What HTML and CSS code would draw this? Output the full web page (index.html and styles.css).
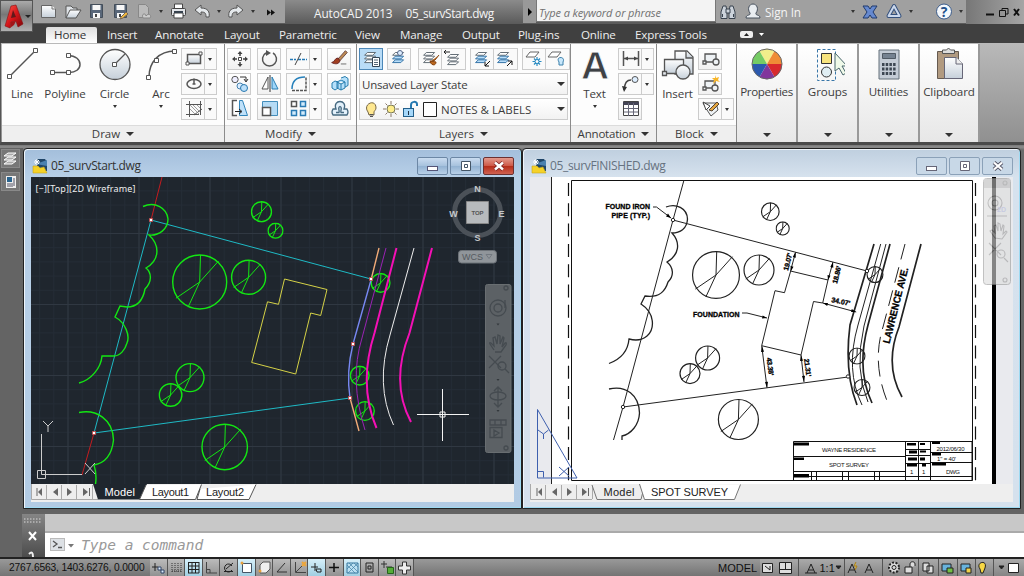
FILE: index.html
```html
<!DOCTYPE html>
<html lang="en">
<head>
<meta charset="utf-8">
<title>AutoCAD 2013 - 05_survStart.dwg</title>
<link rel="stylesheet" href="styles.css">
</head>
<body>
<svg class="defs" width="0" height="0" aria-hidden="true">
  <defs>
    <linearGradient id="steel" x1="0" y1="0" x2="0" y2="1"><stop offset="0" stop-color="#fff"/><stop offset="1" stop-color="#c6d0da"/></linearGradient>
    <linearGradient id="red" x1="0" y1="0" x2="1" y2="1"><stop offset="0" stop-color="#ff5a4c"/><stop offset=".5" stop-color="#d5161a"/><stop offset="1" stop-color="#7c0508"/></linearGradient>
    <pattern id="minor" x="67.5" y="233" width="14.2" height="14.2" patternUnits="userSpaceOnUse"><path d="M.5 0V14.2M0 .5H14.2" stroke="#242c36"/></pattern>
    <pattern id="major" x="67.5" y="233" width="71" height="71" patternUnits="userSpaceOnUse"><path d="M.5 0V71M0 .5H71" stroke="#303842"/></pattern>
    <symbol id="tree" viewBox="-1.1 -1.1 2.2 2.2"><g fill="none"><circle r="1" vector-effect="non-scaling-stroke"/><path d="M.03-1 0 0-.43.93M-.88.6 0 0 .7-.78" vector-effect="non-scaling-stroke" stroke-width="1"/></g></symbol>
    <symbol id="doc" viewBox="0 0 24 24"><path d="M5.500 5.500h11l3 3v9h-14z" fill="url(#steel)" stroke="#666"/><path d="M16 5v4h4" fill="#eee" stroke="#777"/></symbol>
    <symbol id="open" viewBox="0 0 24 24"><path d="M6 18V6h5l2 2h4v3" fill="#dfe3e7" stroke="#555"/><path d="M6 18l4-8h11l-5 8z" fill="url(#steel)" stroke="#555"/></symbol>
    <symbol id="save" viewBox="0 0 24 24"><path d="M6.500 4.500h12v13h-12z" fill="#596779" stroke="#444e5a"/><path d="M8.500 5h8v5h-8zM9 13h7v5H9z" fill="#f7f7f7"/><path d="M11 14h2v3h-2z" fill="#444"/></symbol>
    <symbol id="cloud" viewBox="0 0 24 24"><path d="M6.500 17.500v-13h7l3 3v10z" fill="#bbb" stroke="#888"/><path d="M11 18c-2-5 3-5 3-2 3-4 6 0 4 2z" fill="#ccc" stroke="#888"/></symbol>
    <symbol id="print" viewBox="0 0 24 24"><path d="M8.500 9V4h8v5" fill="#fff" stroke="#444"/><rect x="5.500" y="8.500" width="14" height="7" rx="1" fill="#e3e6ea" stroke="#444"/><path d="M8 13h9v5H8z" fill="#fff" stroke="#444"/><path d="M8 12h9" stroke="#36424e" stroke-width="2"/></symbol>
    <symbol id="undo" viewBox="0 0 24 24"><path d="M5 10l6-5v3c7 0 9 4 8 9h-3c0-4-1-5-5-5v3z" fill="#e4e8eb" stroke="#555"/></symbol>
    <symbol id="brush" viewBox="0 0 24 24"><path d="M19 4l-8 9 2 2 8-9z" fill="#bd8a52" stroke="#644"/><path d="M11 12c-4 0-3 4-7 5 4 2 8 2 9-2z" fill="#a13e20" stroke="#622"/><path d="M14 18.500h6" stroke="#666"/></symbol>
    <symbol id="layers" viewBox="0 0 24 24"><path d="M8 6h9l-3 3H5zM8 10h9l-3 3H5zM8 14h9l-3 3H5z" fill="#fff" stroke="#57616a"/></symbol>
    <symbol id="layersb" viewBox="0 0 24 24"><path d="M8 6h9l-3 3H5z" fill="#fff" stroke="#57616a"/><path d="M8 10h9l-3 3H5zM8 14h9l-3 3H5z" fill="#b9defa" stroke="#286aa0"/></symbol>
    <symbol id="dwg" viewBox="0 0 16 16"><path d="M5 1h8l2 3v9H5z" fill="#1f4568"/><path d="M4 6l11-4v6z" fill="#4a81b0"/><path d="M1 8h5l2 2 4-1 3 6H1z" fill="#f5d229" stroke="#c8a617" stroke-width=".6"/><path d="M5 1v6M2 4h6M3 2l4 4M7 2L3 6" stroke="#fff"/></symbol>
  </defs>
</svg>

<div class="app">
  <header class="title">
    <div class="qat">
      <svg class="i"><use href="#doc"/></svg><svg class="i"><use href="#open"/></svg><svg class="i"><use href="#save"/></svg>
      <svg class="i"><use href="#save"/><path d="M13 17l5-5 2 2-5 4-3 1z" fill="#f3bb3d" stroke="#765"/></svg>
      <svg class="i"><use href="#cloud"/></svg><i class="caret sm"></i>
      <svg class="i"><use href="#print"/></svg><svg class="i"><use href="#undo"/></svg><i class="caret sm"></i>
      <svg class="i flip"><use href="#undo"/></svg><i class="caret sm"></i>
      <svg class="i"><path d="M9 9.500l4 3-4 3zM13 9.500l4 3-4 3z" fill="#111"/></svg>
    </div>
    <div class="name"><span>AutoCAD 2013</span><span class="file">05_survStart.dwg</span></div>
    <div class="arrow"><svg width="13" height="24"><path d="M5 8l4 4-4 4z" fill="#000"/></svg></div>
    <div class="search">Type a keyword or phrase</div>
    <div class="info">
      <svg class="i"><g fill="#ccd3db" stroke="#38424e"><path d="M5 18.500V12l2-6h3l1 6v6.500zM13 18.500V12l1-6h3l2 6v6.500z"/><path d="M10 9h4v4h-4z"/><path d="M6.500 14v3M17.500 14v3"/></g></svg>
      <svg class="i"><path d="M5 18c0-4 5-2 4-5-3-4-1-9 3-9s6 5 3 9c-1 3 4 1 4 5z" fill="#e9edf1" stroke="#46505d"/></svg>
      <span class="sign">Sign In</span><i class="caret sm"></i>
      <svg class="i"><path d="M5 6h5l2 3 2-3h5l-4 6 4 6h-5l-2-3-2 3H5l4-6z" fill="#6689cf" stroke="#213a6c"/></svg>
      <svg class="i"><path d="M12 6l5.500 10h-11z" fill="none" stroke="#34507c" stroke-width="4" stroke-linejoin="round"/><path d="M12 6l5.500 10h-11z" fill="none" stroke="#cbd8ec" stroke-width="2" stroke-linejoin="round"/></svg><i class="caret sm"></i>
      <svg class="i help"><circle cx="12" cy="11.500" r="7.500" fill="#f4f8fc" stroke="#3c5c8b"/><text x="12" y="16.500" text-anchor="middle" class="q">?</text></svg><i class="caret sm"></i>
    </div>
    <div class="wctl"><svg width="58" height="24" fill="none" stroke="#111"><path d="M20 14.500h8" stroke-width="2"/><path d="M33.500 10.500h6v6h-6zM36 10V8.500h6v5.500h-2"/><path d="M48 9l5 6.500M53 9l-5 6.500" stroke-width="2"/></svg></div>
    <div class="logo"><svg width="32" height="32"><path d="M4 25L10 5l5-1 7 19-5 3-2-6-5 1-1 6z" fill="url(#red)" stroke="#861013" stroke-width=".6"/><path d="M10 17l2-8 3 7z" fill="#62191a"/><path d="M9 27l1-6 5-1-2 4z" fill="#a31518"/><path d="M24 14h6l-3 3z" fill="#222"/></svg></div>
  </header>

  <nav class="tabs">
    <a class="on">Home</a><a style="width:48px">Insert</a><a style="width:69px">Annotate</a><a style="width:55px">Layout</a><a style="width:76px">Parametric</a><a style="width:45px">View</a><a style="width:62px">Manage</a><a style="width:56px">Output</a><a style="width:63px">Plug-ins</a><a style="width:54px">Online</a><a style="width:92px">Express Tools</a>
    <svg width="52" height="19"><rect x="23" y="7" width="13" height="7" rx="2" fill="#eee"/><path d="M27 12l2.500-3 2.500 3z" fill="#222"/><path d="M42 9h5l-2.500 3z" fill="#fff"/></svg>
  </nav>

  <main class="ribbon">
    <section class="panel draw">
      <div class="tools">
        <div class="big" style="width:40px"><svg width="40" height="38"><g fill="#fff" stroke="#555"><path d="M8 32L34 6" stroke-width="1.500"/><path d="M5.500 30.500h4v4h-4zM31.500 4.500h4v4h-4z"/></g></svg><b>Line</b></div>
        <div class="big" style="width:46px"><svg width="46" height="38"><g fill="none" stroke="#555"><path d="M11 28.500h15c16 1 16-17 0-17" stroke-width="1.500"/><path d="M8.500 26.500h4v4h-4zM24.500 26.500h4v4h-4zM24.500 9.500h4v4h-4z" fill="#fff"/></g></svg><b>Polyline</b></div>
        <div class="big" style="width:53px"><svg width="53" height="38"><circle cx="27" cy="20.500" r="15" fill="url(#steel)" stroke="#555" stroke-width="1.300"/><path d="M27 20L37 10" stroke="#555" stroke-width="1.300"/><path d="M24.500 18.500h4v4h-4z" fill="#fff" stroke="#555"/></svg><b>Circle</b><i class="caret"></i></div>
        <div class="big" style="width:40px"><svg width="40" height="38"><g fill="#fff" stroke="#555"><path d="M8 33C8 18 18 7 34 7" fill="none" stroke-width="1.500"/><path d="M5.500 31.500h4v4h-4zM13.500 14.500h4v4h-4zM31.500 5.500h4v4h-4z"/></g></svg><b>Arc</b><i class="caret"></i></div>
        <div class="col">
          <div class="btn split"><svg class="i"><path d="M5.500 7.500h13v9h-13z" fill="url(#steel)" stroke="#555" stroke-width="1.500"/><path d="M4 15h3v3H4zM17 5h3v3h-3z" fill="#fff" stroke="#555"/></svg><i class="caret"></i></div>
          <div class="btn split"><svg class="i"><ellipse cx="12" cy="12" rx="7" ry="4.500" fill="none" stroke="#555" stroke-width="1.500"/><path d="M12 6.500v5.500M10.500 12h3" stroke="#555" stroke-width="1.500"/></svg><i class="caret"></i></div>
          <div class="btn split"><svg class="i"><path d="M7.500 4v16M18.500 4v14M4 7.500h16M4 17.500h13M12 18l8-6" stroke="#555" fill="none"/><path d="M8 8l9 9M11 8l7 7M8 12l5 5M15 8l3 3" stroke="#888" stroke-width=".8"/></svg><i class="caret"></i></div>
        </div>
      </div><footer>Draw <i class="caret lg"></i></footer>
    </section>

    <section class="panel modify">
      <div class="tools">
        <div class="col c1">
          <div class="btn"><svg class="i"><path d="M12 5v4M12 15v4M5 12h4M15 12h4" stroke="#444" stroke-width="1.500"/><path d="M9.500 7L12 4l2.500 3zM9.500 17l2.500 3 2.500-3zM7 9.500L4 12l3 2.500zM17 9.500l3 2.500-3 2.500z" fill="#444"/><path d="M10.500 10.500h3v3h-3z" fill="#fff" stroke="#444"/></svg></div>
          <div class="btn"><svg class="i"><circle cx="7" cy="7.500" r="3.200" fill="#eef" stroke="#555"/><circle cx="12" cy="14" r="3" fill="#def" stroke="#4782b0"/><circle cx="16" cy="16" r="3.500" fill="#bce0fa" stroke="#2878af"/><path d="M12 5h6v4M16 7l2 3 2-3" fill="none" stroke="#333"/></svg></div>
          <div class="btn"><svg class="i"><path d="M9 3.500H4.500v15H9" fill="#fff" stroke="#555" stroke-width="1.500"/><path d="M11.500 3.500h3l5 15h-8z" fill="#bfe1fa" stroke="#3285ba"/><path d="M7 14.500h6M11 12l3 2.500-3 2.500" fill="none" stroke="#222"/></svg></div>
        </div>
        <div class="col c2">
          <div class="btn"><svg class="i"><path d="M8 6a7 7 0 1 0 7 0" fill="none" stroke="#555" stroke-width="1.500"/><path d="M8 3l5 3-5 3z" fill="#555"/></svg></div>
          <div class="btn"><svg class="i"><path d="M10 5v12H4z" fill="#fff" stroke="#555"/><path d="M14 5v12h6z" fill="#9fd5f8" stroke="#2a7eb2"/><path d="M12 3v17" stroke="#333"/></svg></div>
          <div class="btn"><svg class="i"><path d="M4.500 4.500h15v14h-15z" fill="#b5dbf5" stroke="#438dba"/><path d="M4.500 10.500h8v8h-8z" fill="#fff" stroke="#555" stroke-width="1.500"/></svg></div>
        </div>
        <div class="col c3">
          <div class="btn split"><svg class="i"><path d="M3 12.500h6M11 12.500h9" stroke="#2378b5" stroke-width="1.500" stroke-dasharray="3 1"/><path d="M8 18l6-12" stroke="#444"/></svg><i class="caret"></i></div>
          <div class="btn split"><svg class="i"><path d="M5 17c0-8 5-12 13-12" fill="none" stroke="#2680bb" stroke-width="1.500"/><path d="M5 18.500h14V5" fill="none" stroke="#555" stroke-width="1.500" stroke-dasharray="3 1"/></svg><i class="caret"></i></div>
          <div class="btn split"><svg class="i" stroke-width="1.500"><path d="M4.500 4.500h5v5h-5z" fill="#fff" stroke="#555"/><path d="M13.500 4.500h5v5h-5zM4.500 13.500h5v5h-5zM13.500 13.500h5v5h-5z" fill="#d2ebfc" stroke="#2a7bb5"/></svg><i class="caret"></i></div>
        </div>
        <div class="col c4">
          <div class="btn"><svg class="i"><use href="#brush"/></svg></div>
          <div class="btn"><svg class="i"><path d="M4 11l3-2 3 1v6l-3 2-3-2zM9 10l4-2 4 2v6l-4 2-4-2zM9 10l4 2 4-2M13 12v6M13 6l4-1.500 3 2v7l-3 1.500" fill="#b5e0fb" stroke="#267cad"/></svg></div>
          <div class="btn"><svg class="i"><path d="M8 12c-4-10 12-10 8 0h3q2 3 0 6H5q-2-3 0-6zM8 15.500h3c1-2-2-5 1-6 3 1 0 4 1 6h3" fill="#e3f1fb" stroke="#466980" stroke-width="1.300"/></svg></div>
        </div>
      </div><footer>Modify <i class="caret lg"></i></footer>
    </section>

    <section class="panel layers">
      <div class="rows">
        <div class="lrow">
          <div class="btn active"><svg class="i"><use href="#layers"/><path d="M12.500 10.500h7v9h-7z" fill="#fff" stroke="#345"/><path d="M14 13h4M14 15.500h4M14 17.500h4" stroke="#567"/></svg></div>
          <div class="btn g4"><svg class="i"><use href="#layersb"/><circle cx="12" cy="6" r="2.500" fill="#def" stroke="#568"/></svg></div>
          <div class="btn pair g7"><svg class="i"><use href="#layers"/><path d="M11 15l5-2 4-5M11 14c1 5 6 5 6 1z" fill="#bd681f" stroke="#864512"/></svg><svg class="i"><use href="#layers" x="2" y="2"/><path d="M3 5h6M5 3L3 5l2 2" fill="none" stroke="#222"/></svg></div>
          <div class="btn pair g4"><svg class="i"><use href="#layersb"/><path d="M19 14l-5 5M14 15v4h4" fill="none" stroke="#111"/></svg><svg class="i"><use href="#layersb"/><path d="M14 19l5-5M15 14h4v4" fill="none" stroke="#111"/></svg></div>
          <div class="btn pair g4"><svg class="i"><path d="M7 5h9l-4 5H3z" fill="#fff" stroke="#666"/><path d="M14 10v9M9.500 14.500h9M11 11.500l6 6M17 11.500l-6 6" stroke="#298bc2" stroke-width="1.200"/><circle cx="14" cy="14.500" r="2" fill="#fff" stroke="#298bc2"/></svg><svg class="i"><path d="M7 5h9l-4 5H3z" fill="#fff" stroke="#666"/><path d="M14 18v-3c-4-6 7-6 4 0v3z" fill="#c9e8fc" stroke="#3b80ab"/></svg></div>
        </div>
        <div class="combo"><span>Unsaved Layer State</span><i class="caret lg"></i></div>
        <div class="combo lay"><svg width="80" height="20"><path d="M8 13c-6-8 8-14 8-4 0 2-2 3-2 4v3H9z" fill="#ffe890" stroke="#776747"/><path d="M9.500 15.500h4M10 17.500h3" stroke="#555"/><circle cx="31" cy="10" r="4" fill="#ffed89" stroke="#775"/><path d="M31 2v3M31 15v3M23 10h3M36 10h3M25.500 4.500l2 2M34.500 13.500l2 2M25.500 15.500l2-2M34.500 6.500l2-2" stroke="#876"/><path d="M51 9V6c0-4 6-4 6-1v2" fill="none" stroke="#2579b1" stroke-width="2"/><rect x="43.500" y="9.500" width="10" height="8" fill="#a6d8fa" stroke="#225f8a"/><path d="M48.500 12v4" stroke="#234"/><path d="M63.500 3.500h13v14h-13z" fill="#fff" stroke="#222"/></svg><span>NOTES &amp; LABELS</span><i class="caret lg"></i></div>
      </div><footer>Layers <i class="caret lg"></i></footer>
    </section>

    <section class="panel anno">
      <div class="tools">
        <div class="big" style="width:47px"><svg width="47" height="38"><text x="24" y="34.500" text-anchor="middle" class="bigA">A</text></svg><b>Text</b><i class="caret"></i></div>
        <div class="col">
          <div class="btn split"><svg class="i"><path d="M4.500 4v15M19.500 4v15M5 11.500h14" stroke="#555" stroke-width="1.500"/><path d="M5 11.500l4-2v4zM19 11.500l-4-2v4z" fill="#444"/></svg><i class="caret"></i></div>
          <div class="btn split"><svg class="i"><path d="M5 18c1-8 3-10 7-10" fill="none" stroke="#444" stroke-width="1.500"/><circle cx="16" cy="7.500" r="3" fill="#def" stroke="#555"/><path d="M3 14l2 6 3-5z" fill="#333"/></svg><i class="caret"></i></div>
          <div class="btn"><svg class="i"><path d="M4.500 4.500h15v14h-15z" fill="#fff" stroke="#444"/><path d="M4 5h16v3H4z" fill="#445"/><path d="M9.500 6v13M14.500 6v13M5 11.500h14M5 15h14" stroke="#667"/></svg></div>
        </div>
      </div><footer>Annotation <i class="caret lg"></i></footer>
    </section>

    <section class="panel block">
      <div class="tools">
        <div class="big" style="width:41px"><svg width="41" height="38"><g fill="url(#steel)" stroke="#555" stroke-width="1.300"><path d="M18 7h12l6 6v17H18z"/><path d="M29 7v7h7"/><path d="M7.500 15.500h19v14h-19z"/><path d="M5.500 27.500h4v4h-4z"/><circle cx="26" cy="28" r="7"/></g></svg><b>Insert</b></div>
        <div class="col">
          <div class="btn"><svg class="i"><g fill="#eef2f5" stroke="#555" stroke-width="1.300"><path d="M6 7h11v8H6z"/><circle cx="17" cy="15" r="3"/><path d="M4 14h3v3H4z"/></g></svg></div>
          <div class="btn"><svg class="i"><g fill="#eef2f5" stroke="#555" stroke-width="1.300"><path d="M6 9h10v7H6z"/><circle cx="16" cy="16" r="3"/><path d="M4 15h3v3H4z"/></g><path d="M16 3l1 3 3-1-1 3 2 2-4-1-3 3 1-4-2-2h3z" fill="#f7b529"/></svg></div>
          <div class="btn split"><svg class="i"><path d="M4 6h13l2 7-7 6-4-6z" fill="#eef2f5" stroke="#555"/><path d="M4 5l3 8 4-4z" fill="#fff" stroke="#444"/><path d="M10 13l8-8 2 2-7 7z" fill="#e3a53e" stroke="#543"/></svg><i class="caret"></i></div>
        </div>
      </div><footer>Block <i class="caret lg"></i></footer>
    </section>

    <section class="panel tall" style="width:61px"><svg width="34" height="36"><g transform="translate(17 19)"><path d="M0 0L-7.500-13A15 15 0 0 1 7.500-13z" fill="#f2ee8b"/><path d="M0 0L7.500-13A15 15 0 0 1 15 0z" fill="#ef8c36"/><path d="M0 0h15A15 15 0 0 1 7.500 13z" fill="#d8292d"/><path d="M0 0l7.500 13a15 15 0 0 1-15 0z" fill="#81369c"/><path d="M0 0l-7.500 13A15 15 0 0 1-15 0z" fill="#2b59ae"/><path d="M0 0h-15a15 15 0 0 1 7.500-13z" fill="#75cb64"/><circle r="15" fill="none" stroke="#666"/></g></svg><b class="tight">Properties</b><i class="caret lg"></i></section>
    <section class="panel tall" style="width:61px"><svg width="34" height="36"><path d="M6.500 4.500h18v31h-18z" fill="none" stroke="#3876a8" stroke-dasharray="3 2"/><path d="M10.500 8.500h10v10h-10z" fill="#f8e47e" stroke="#333"/><circle cx="15.500" cy="27" r="5" fill="#e0eef3" stroke="#333"/><path d="M24 8v18l4-3 4 7 3-2-4-7h5z" fill="#eff9e9" stroke="#48666b"/></svg><b>Groups</b><i class="caret lg"></i></section>
    <section class="panel tall" style="width:61px"><svg width="34" height="36"><path d="M7 5h20v29H7z" fill="#c4ccd6" stroke="#65707b"/><path d="M10.500 8.500h13v5h-13z" fill="#758291" stroke="#505a65"/><path d="M10 19.500h14M10 24h14M10 28.500h14" stroke="#3c4652" stroke-width="3" stroke-dasharray="2.500 1.200"/></svg><b>Utilities</b><i class="caret lg"></i></section>
    <section class="panel tall" style="width:60px"><svg width="34" height="36"><path d="M5.500 6.500h21v27h-21z" fill="#b19a80" stroke="#655a50"/><path d="M10.500 8.500V5h4l2-2 2 2h4v3.500z" fill="#ddd" stroke="#555"/><path d="M12.500 12.500h12l6 6v15h-18z" fill="url(#steel)" stroke="#667"/><path d="M24 12v7h7" fill="#eee" stroke="#667"/></svg><b>Clipboard</b><i class="caret lg"></i></section>
  </main>

  <div class="work">
    <aside class="side">
      <div class="sbtn"><svg width="16" height="17"><path d="M6 3h8l-4 3H2zM6 7h8l-4 3H2zM6 11h8l-4 3H2z" fill="#aaa" stroke="#fff"/></svg></div>
      <div class="sbtn"><svg width="16" height="17"><path d="M4 3h10v12H4z" fill="#eee"/><path d="M5 4h5v5H5z" fill="#2a648e"/><path d="M5 11h6M5 13h6M12 5v8" stroke="#556"/></svg></div>
    </aside>

    <section class="win cur">
      <div class="cap"><svg width="16" height="16"><use href="#dwg"/></svg><span>05_survStart.dwg</span>
        <div class="wb"><svg width="29" height="16"><rect x="9.500" y="8.500" width="10" height="4" fill="#fff" stroke="#557"/></svg></div>
        <div class="wb"><svg width="29" height="16"><path d="M10.500 3.500h9v9h-9zM13.500 6.500h3v3h-3z" fill="#fff" stroke="#456"/></svg></div>
        <div class="wb close"><svg width="29" height="16"><path d="M11 4.500l8 7M19 4.500l-8 7" stroke="#722" stroke-width="4"/><path d="M11 4.500l8 7M19 4.500l-8 7" stroke="#fff" stroke-width="2.500"/></svg></div>
      </div>
      <svg class="view" width="483" height="307" viewBox="31 177 483 307">
        <path d="M31 177h483v307H31z" fill="#1f262e"/><path d="M31 177h483v307H31z" fill="url(#minor)"/><path d="M31 177h483v307H31z" fill="url(#major)"/>
        <text x="35.500" y="191.500" class="vlabel" textLength="100">[−][Top][2D Wireframe]</text>
        <g fill="none" stroke="#1fd4df" stroke-width="1" opacity=".85"><path d="M94 433L151 220l220 59M94 433l256-35"/></g>
        <path d="M162 177l-11 43M94 433l-12 42" stroke="#c41c20"/>
        <g fill="none" stroke="#13e613" stroke-width="1.400">
          <path d="M143 206.500C155 201 167 208 168 219C168 229 159 236 149 235C160 245 160 260 146 268C152 273 152 282 145 289C143 300 137 307 127 307L120 306L115 317C126 323 130 336 127 343C125 350 120 356 114 356H102C101 368 91 380 79 383M79 412.500C96 409 113 419 113.500 440C112 454 105 463 94 465Q97 474 95.500 484"/>
          <use href="#tree" x="170" y="252.300" width="59.400" height="59.400"/><use href="#tree" x="229.900" y="258.600" width="37.400" height="37.400"/><use href="#tree" x="250.500" y="200.700" width="22" height="22"/><use href="#tree" x="267.300" y="222.500" width="16.400" height="16.400"/><use href="#tree" x="174.600" y="362.200" width="30.800" height="30.800"/><use href="#tree" x="158.200" y="382.600" width="24.800" height="24.800"/><use href="#tree" x="199.700" y="422" width="50" height="50"/><use href="#tree" x="370.300" y="272.600" width="20.600" height="20.600"/><use href="#tree" x="349.400" y="365.300" width="20.600" height="20.600"/><use href="#tree" x="354.600" y="400.700" width="20.600" height="20.600"/>
        </g>
        <path d="M284.500 279l42.500 10.500-6.300 26-10-2.500-15 61-44-11.500 15.800-60.700 11 2.500z" fill="none" stroke="#d5d247"/>
        <g fill="none">
          <path d="M379 248l-8 32M350 398l9 33" stroke="#f1ab78" stroke-width="1.400"/><path d="M371 280l-18 64Q346 372 350 398" stroke="#7888f2" stroke-width="1.400"/>
          <path d="M386 248l-24 90Q349 380 365 430" stroke="#9a23b4"/>
          <path d="M396.500 248l-22 85Q358 385 376.500 428M432 248l-22.500 85Q390 383 411 422" stroke="#f410b5" stroke-width="2"/>
          <path d="M414 248l-24 87Q375 385 393.500 425" stroke="#eee"/>
          <path d="M442.500 389v52M417 414.500h52M440 412h5v5h-5z" stroke="#f4f4f4"/>
          <path d="M41.500 434v40.500H82M37.500 470.500h8v8h-8zM43 421l5 5 5-5M48 426v6M85 463l10 11M95 463l-10 11" stroke="#ccc"/>
        </g>
        <path d="M149.500 218.500h3v3h-3zM92.500 431.500h3v3h-3zM369.500 277.500h3v3h-3zM351.500 342.500h3v3h-3zM348.500 396.500h3v3h-3z" fill="#fff" stroke="#c44" stroke-width=".8"/>
        <circle cx="477.500" cy="212.500" r="23" fill="none" stroke="#4b5158" stroke-width="5"/>
        <path d="M466.500 201.500h22v22h-22z" fill="#b7babd" stroke="#888"/>
        <g class="compass" text-anchor="middle"><text x="477.500" y="192">N</text><text x="477.500" y="240.500">S</text><text x="453.500" y="216.500">W</text><text x="501.500" y="216.500">E</text><text x="477.500" y="215" class="top">TOP</text></g>
        <rect x="458.500" y="250.500" width="38" height="12.500" rx="3" fill="#90959a" stroke="#6d7278"/><text x="462" y="260" class="wcs">WCS</text><path d="M486 254.500h6l-3 4z" fill="none" stroke="#737980"/>
        <rect x="485.500" y="284.500" width="25.500" height="168" rx="2" fill="#5c6165" stroke="#696e71"/>
        <g fill="none" stroke="#454b50" stroke-width="1.300"><circle cx="498" cy="308" r="8"/><circle cx="498" cy="308" r="4"/><circle cx="506" cy="288" r="2"/><path d="M505 300v8M494 350l-4-6q-1-2 1-1l3 3-1-8 2-1 2 7 1-9 2 1v8l3-7 1 1-2 9 3-4q2-1 1 2l-5 7h-6M489 356l12 12M501 356l-12 12"/><circle cx="502" cy="366" r="4"/><path d="M505 369l4 4M498 387v20M494 391l4-4 4 4M494 403l4 4 4-4"/><ellipse cx="498" cy="396" rx="8" ry="4"/><path d="M490 420h16v5h-16zM495 420v5M501 420v5M490 427.500h12v10h-12zM494 430l5 3-5 3z"/><circle cx="506" cy="448" r="2"/></g>
        <path d="M496.500 323.500h3l-1.500 2zM496.500 379h3l-1.500 2zM496.500 410h3l-1.500 2z" fill="#33383c"/>
      </svg>
      <svg class="strip" width="483" height="18" viewBox="31 484 483 18">
        <path d="M31 484h483v18H31z" fill="#eee"/><path d="M31.500 484v15.500H98M46.500 485v14M61.500 485v14M76.500 485v14M92.500 485v14" stroke="#aaa" fill="none"/>
        <path d="M42 488v8l-4-4zM58 488v8l-5-4zM67 488v8l5-4zM83 488v8l5-4z" fill="#666"/><path d="M37 488v8M89.500 488v8" stroke="#666"/>
        <path d="M93 484h54l-7 15.500H98z" fill="#1f262e"/><path d="M146 485l-6.500 14.500h56l6-15M200 489l-3 10.500h52l7-15" fill="#fff" stroke="#555"/>
        <g class="mtab"><text x="104.500" y="496.300" fill="#fff" class="cur-tab" textLength="30.500">Model</text><text x="152" y="496.300" textLength="37">Layout1</text><text x="206" y="496.300" textLength="38">Layout2</text></g>
      </svg>
    </section>

    <section class="win off">
      <div class="cap"><svg width="16" height="16"><use href="#dwg"/></svg><span>05_survFINISHED.dwg</span>
        <div class="wb"><svg width="29" height="16"><rect x="9.500" y="8.500" width="10" height="4" fill="#fff" stroke="#667"/></svg></div>
        <div class="wb"><svg width="29" height="16"><path d="M10.500 3.500h9v9h-9zM13.500 6.500h3v3h-3z" fill="#fff" stroke="#667"/></svg></div>
        <div class="wb"><svg width="29" height="16"><path d="M11 4.500l8 7M19 4.500l-8 7" stroke="#556" stroke-width="4"/><path d="M11 4.500l8 7M19 4.500l-8 7" stroke="#fff" stroke-width="2.200"/></svg></div>
      </div>
      <svg class="view" width="483" height="307" viewBox="530 177 483 307">
        <path d="M530 177h483v307H530z" fill="#e9eaee"/><path d="M551.500 177h441v307h-441z" fill="#fff"/><path d="M551.500 177v307" stroke="#222"/><path d="M992 177h4v307h-4z"/>
        <g fill="none" stroke="#111"><path d="M571.500 180.500h401v300h-401z"/><path d="M568.500 183v298M975.500 183v298" stroke-width="1.200" stroke-dasharray="13 7.300"/></g>
        <g fill="none" stroke="#222">
          <path d="M684 180l-11 40-50 187-9.500 33M673 220l194 51M623 407l225-30" />
          <path d="M666 207C676 203 687 208 687.500 219C687 229 680 233 672 233C681 243 679 255 667 262C674 268 674 276 668 282C665 292 659 298 645 296L641 304C655 313 655 329 647 336Q640 342 629 339C628 351 621 359 609 363.500M609 389C626 385 639 395 639.500 413C639 425 631 434 622 436v4" stroke-width="1.300"/>
          <path d="M795.500 252.500l-5 18.500 37.500 9 5-18M790.700 271l-6.200 21.700-9.500-2L761.700 345.700 801 355l12.500-53.500 9.200 1.500L828 280M822.700 303l33.500 9M761.700 345.700l5.300 42M801 355l3 27" />
          <path d="M653 207h3.500L671 218M742 313h5l20 5"/>
          <path d="M874 244L850 325Q844 372 857 405M890 244l-22 81Q856 370 872 403M921 244l-22 83Q884 365 902 397" stroke-width="1.700"/><path d="M880.700 244L858 325Q845 370 862 405M886 244l-22 82Q854 370 868 402"/><path d="M905 244l-22 83Q872 362 886.700 400" stroke-dasharray="16 8"/>
          <g stroke-width="1.200"><use href="#tree" x="690.200" y="249.200" width="51.600" height="51.600"/><use href="#tree" x="742.500" y="253.500" width="33" height="33"/><use href="#tree" x="760.600" y="202" width="19.400" height="19.400"/><use href="#tree" x="775.500" y="221.300" width="14.400" height="14.400"/><use href="#tree" x="694.400" y="344.800" width="26.400" height="26.400"/><use href="#tree" x="679" y="362.600" width="22" height="22"/><use href="#tree" x="716.400" y="397.500" width="44" height="44"/><use href="#tree" x="866.200" y="265.800" width="17.600" height="17.600"/><use href="#tree" x="848.200" y="347.200" width="17.600" height="17.600"/><use href="#tree" x="853.200" y="378.700" width="17.600" height="17.600"/></g>
          <g fill="#fff"><circle cx="673" cy="220" r="1.700"/><circle cx="623" cy="407" r="1.700"/><circle cx="848" cy="376.500" r="1.700"/><circle cx="867" cy="271" r="1.700"/></g>
        </g>
        <path d="M671 218l-5-1.500 2-3zM767 318l-5 .5.700-3zM795.500 252l-2.700 5 3 .8zM833 262l-2.700 5 3 .8zM791 271l-.5-5 3 .8zM828 280l-.5-5 3 .8zM823 303l5 0-.8 3zM856 312l-5 0 .8-3zM762 346l-1 6 3-.3zM767 388l-2-6 3-.3zM801 355l-1 6 3-.3zM804 382l-2-6 3-.3z"/>
        <g class="plan"><text x="605.500" y="209.300" textLength="44.500">FOUND IRON</text><text x="611.500" y="218" textLength="38.500">PIPE (TYP.)</text><text x="693" y="317" textLength="46.500">FOUNDATION</text>
          <text transform="translate(788 271) rotate(-76)" textLength="18">19.07'</text><text transform="translate(837 284) rotate(-76)" textLength="18">18.86'</text><text transform="translate(831 302) rotate(12)" textLength="19">34.07'</text><text transform="translate(766.500 358) rotate(82)" textLength="18">43.38'</text><text transform="translate(804 359) rotate(82)" textLength="18">21.31'</text>
          <text class="ave" transform="translate(889.500 344) rotate(-76)" textLength="78" lengthAdjust="spacingAndGlyphs">LAWRENCE AVE.</text></g>
        <g fill="none" stroke="#111"><path d="M793.500 441.500H972v39H793.500zM794 456.500h112M794 471.500h112M794 476.500h178M905.500 441v39M918.500 441v39M930.500 441v39M906 449.500h24M906 455.500h24M906 463.500h24M931 452.500h41M931 462.500h41M811.500 472v8M816.500 472v8M842.500 472v8M848.500 472v8M874.500 472v8M879.500 472v8"/></g>
        <path d="M794 442.500h15v3h-15zM794 457.500h10v2.500h-10zM794 474h15v3.500h-15zM907 443h9v2.500h-9zM920 443h5v2h-5zM909 450.500h8v3h-8zM920 450.500h6v2h-6zM908 457.500h9v3h-9zM920 457.500h5v3h-5zM907 464h10v2.500h-10zM922 463.500h4v3h-4zM932 441.500h8v2.500h-8zM932 453h9v2.500h-9zM932 463h14v2.500h-14z"/>
        <g class="tb"><text x="822" y="451.500" textLength="54">WAYNE RESIDENCE</text><text x="829" y="466.800" textLength="40">SPOT SURVEY</text><text x="936.500" y="450.800" textLength="28">2012/06/30</text><text x="937" y="461.200" textLength="19">1" = 40'</text><text x="946" y="474" textLength="14">DWG</text><text x="910" y="474">1</text><text x="922" y="474">1</text></g>
        <path d="M537.500 409.500v68.500h39.500zM537.500 471.500h6v6M538 430l5.500 4 5-4M543.500 434v5M559 467l10 9M569 467l-10 9" fill="none" stroke="#3f60ae"/>
        <g opacity=".6"><rect x="983.500" y="178.500" width="27" height="106" rx="3" fill="#ddd" stroke="#999"/><path d="M984 179h26v9h-26z" fill="#bbb"/><g fill="none" stroke="#999" stroke-width="1.100"><circle cx="995" cy="203" r="7"/><circle cx="995" cy="203" r="3"/><circle cx="1005" cy="183" r="2"/><circle cx="1005" cy="280" r="2"/><path d="M987 216h20M995 238l-5-7 2-1 3 3-1-7 2-1 2 6v-8l2 1 1 7 2-6 1 1-1 8 3-3 1 1-5 7zM989 243l12 12M1001 243l-12 12M1004 258l4 4"/><circle cx="1001" cy="254" r="4"/></g></g><text x="997" y="212" class="two">2D</text>
      </svg>
      <svg class="strip" width="483" height="18" viewBox="530 484 483 18">
        <path d="M530 484h483v18H530z" fill="#eee"/><path d="M530.500 484v15.500H592M545.500 485v14M561.500 485v14M576.500 485v14M592.500 485v14" stroke="#aaa" fill="none"/>
        <path d="M542 488v8l-4-4zM557 488v8l-5-4zM567 488v8l5-4zM582 488v8l5-4z" fill="#666"/><path d="M537 488v8M588.500 488v8" stroke="#666"/>
        <path d="M592 485l5 14.500h44l2-8-3-7" fill="#eee" stroke="#777"/><path d="M639.500 484l5 15.500h90l6-15" fill="#fff" stroke="#777"/>
        <g class="mtab"><text x="603.500" y="496.300" textLength="31">Model</text><text x="651" y="496.300" textLength="77">SPOT SURVEY</text></g>
      </svg>
    </section>
  </div>

  <section class="cmd">
    <div class="grip"><svg width="22" height="43"><path d="M2 5h18M2 8h18" stroke="#bbb" stroke-width="1.500" stroke-dasharray="1.500 1.500"/><path d="M7 18l7 8M14 18l-7 8" stroke="#fff" stroke-width="2"/><path d="M7 40q4-4 4 3" fill="none" stroke="#eee" stroke-width="2"/></svg></div>
    <div class="lines"><div class="hist"></div><div class="prompt"><svg width="28" height="16"><rect x=".5" y="1.500" width="14" height="12" fill="#dde1e5" stroke="#bbb"/><path d="M3 4l4 3-4 3M8 10.500h4" fill="none" stroke="#555" stroke-width="1.300"/><path d="M18 7h6l-3 3.500z" fill="#777"/></svg><em>Type a command</em></div></div>
  </section>

  <footer class="status">
    <span class="coord">2767.6563, 1403.6276, 0.0000</span>
    <svg class="s"><path d="M2 8h6M5 4v8" stroke="#222"/><path d="M8 8h3v3H8zM11 11h3v3h-3z" fill="#def" stroke="#346"/></svg>
    <svg class="s"><path d="M4 4v9M7 4v9M10 4v9M4 12h9M13 4v9" stroke="#333" stroke-dasharray="1 1"/></svg>
    <svg class="s on"><path d="M3 3.500h11M3 7h11M3 10.500h11M3 14h11M3.500 3v11M7 3v11M10.500 3v11M14 3v11" stroke="#222"/></svg>
    <svg class="s"><path d="M3.500 3v11H14M3 10.500h4V14" fill="none" stroke="#444"/></svg>
    <svg class="s"><path d="M4 12.500h9M6 10l7-6M12 7a4 4 0 1 0 0 4" fill="none" stroke="#222"/></svg>
    <svg class="s on"><path d="M4.500 4.500h9v9h-9z" fill="#fff" stroke="#456"/><circle cx="4" cy="4" r="1.500" fill="#e8a13c"/></svg>
    <svg class="s"><path d="M4 6l3-3h7v7l-4 4H4z" fill="#eee" stroke="#555"/><circle cx="4" cy="12" r="1.500" fill="#e8a13c"/></svg>
    <svg class="s"><path d="M12 4l-8 9h10" fill="none" stroke="#333"/></svg>
    <svg class="s"><path d="M4.500 3v10.500H15M5 13l7-7" fill="none" stroke="#444"/><path d="M11 3l4 4M15 3l-4 4" stroke="#eda73b" stroke-width="2"/></svg>
    <svg class="s on"><path d="M3 8h7M7 4v8M8 10h5v3H9z" stroke="#222" fill="none"/></svg>
    <svg class="s"><path d="M3 8.500h10M8 4v9" stroke="#111" stroke-width="1.500"/></svg>
    <svg class="s on"><path d="M3 4h11v10H3z" fill="#bce0f2" stroke="#37779e"/><path d="M3 6l8 8M5 4l9 9M10 4l4 4M4 14L14 4M3 10l6-6" stroke="#3f7fa5" stroke-width=".7"/></svg>
    <svg class="s"><path d="M5 4h7v9H5zM7 7h3v3H7z" fill="none" stroke="#222"/></svg>
    <svg class="s"><path d="M2 5h6M5 2v7M7 8h6" stroke="#333"/><path d="M8.500 8.500h6v6h-6z" fill="#55ad38" stroke="#25641b"/></svg>
    <svg class="s"><path d="M6.500 3h4v4h4v4h-4v4h-4v-4h-4V7h4z" fill="#eee" stroke="#333"/></svg>
    <span class="model">MODEL</span>
    <svg width="264" height="17" class="tray"><g fill="#ddd" stroke="#222">
      <path d="M2.500 4.500h10v9h-10z"/><path d="M5 7l5 4M10 7v4" fill="none"/><path d="M19.500 3.500h12v11h-12z"/><path d="M19 10.500h13M25.500 3v8" fill="none"/>
      <path d="M47 14l4-9 4 9M48.500 11h5M45 14h12" fill="none"/><path d="M76 7h5l-2.500 3z" fill="#222"/>
      <path d="M88 14l4-9 4 9M89.500 11h5M105 14l4-9 4 9M106.500 11h5" fill="none"/><path d="M96 3l-2 4h3l-2 4" fill="#edc238" stroke="#a87f18"/>
      <circle cx="134" cy="8.500" r="5" stroke-dasharray="2 1.500" stroke-width="2"/><circle cx="134" cy="8.500" r="2"/><path d="M145 8h7v6h-7zM150 8V5c0-3 5-3 5 0v2"/>
      <path d="M163 4h6v8h-6zM167 7h6v7h-6z"/><path d="M182 5h9v7h-9z" fill="#68b3dc"/><path d="M187 9h6v5h-6z" fill="#72bf45"/><path d="M201 5h9v7h-9z" fill="#68b3dc"/><path d="M206 9h5v5h-5z" fill="#f0d24a"/><path d="M220 10c-5-7 8-10 5-1l-2 5h-2z" fill="#f7d745"/><path d="M239 7h5l-2.500 3z" fill="#222"/><path d="M248.500 4.500h10v9h-10z" fill="#fff"/>
    </g><path d="M38.500 0v17M84.500 0v17M122.500 0v17M158.500 0v17M178.500 0v17M197.500 0v17M215.500 0v17M233.500 0v17" stroke="#555"/><text x="59.500" y="12.500" class="scale">1:1</text></svg>
  </footer>
</div>
</body>
</html>
```
FILE: styles.css
```css
* { box-sizing: border-box; }
body { margin: 0; width: 1024px; height: 576px; overflow: hidden; background: #5b5b5b; color: #3c3c3c; font-family: "Open Sans", "Noto Sans", sans-serif; font-size: 11.5px; }
svg { display: block; flex: none; }
.defs { position: absolute; }
.app { display: flex; flex-direction: column; width: 1024px; height: 576px; }
.i { width: 24px; height: 24px; }
.flip { transform: scaleX(-1); }
.caret { flex: none; display: inline-block; width: 0; height: 0; border: 2.5px solid transparent; border-top: 3px solid #333; border-bottom: 0; }
.caret.lg { border-width: 4px 4px 0; }
.caret.sm { margin: 0 3px; }

.title { position: relative; display: flex; height: 24px; flex: none; color: #f4f4f4; line-height: 24px; }
.qat { display: flex; align-items: center; width: 285px; padding-left: 36px; background: #a0a0a0; height: 23px; }
.name { width: 238px; display: flex; gap: 13px; padding-left: 29px; font-size: 11.8px; line-height: 26px; background: linear-gradient(#8b8b8b, #5a5a5a); white-space: nowrap; letter-spacing: -.08px; }
.name .file { letter-spacing: -.38px; }
.arrow { width: 13px; background: #999; height: 23px; }
.search { width: 180px; padding-left: 2px; height: 22px; line-height: 26px; font-size: 11px; font-style: italic; color: #707070; background: #f3f3f3; border: 1px solid #777; border-top: 0; letter-spacing: -.12px; white-space: nowrap; }
.info { display: flex; align-items: center; width: 250px; height: 23px; background: #a0a0a0; }
.info svg:nth-of-type(2) { margin-left: 1px; }
.sign { width: 84px; font-size: 11.8px; letter-spacing: -.1px; }
.info .help { margin-left: 16px; }
.q { font: bold 14px "Open Sans", sans-serif; fill: #22508b; }
.wctl { width: 58px; background: linear-gradient(90deg, #777, #a5a5a5); }
.logo { position: absolute; left: 0; top: 0; width: 33px; height: 32px; border: 1px solid #555; background: linear-gradient(#aaa, #777 45%, #b0b0b0); z-index: 1; }

.tabs { display: flex; height: 19px; flex: none; padding-left: 46px; background: #404040; color: #eee; font-size: 11.6px; line-height: 21px; white-space: nowrap; letter-spacing: -.15px; }
.tabs a + a { padding-left: 10px; }
.tabs .on { width: 51px; padding-left: 8px; color: #333; background: linear-gradient(#dedede, #fff); border-radius: 2px 2px 0 0; margin-top: 3px; line-height: 16px; }

.ribbon { display: flex; height: 102px; flex: none; padding: 1px 0 0 1px; background: linear-gradient(#b9b9b9, #909090); border-bottom: 3px solid #4a4a4a; border-left: 1px solid #555; }
.panel { display: flex; flex-direction: column; background: #fdfdfd; border-right: 1px solid #8b8b8b; }
.panel footer { display: flex; gap: 6px; align-items: center; justify-content: center; height: 17px; background: #efefef; border-top: 1px solid #dcdcdc; font-size: 11.5px; line-height: 16px; }
.tools { display: flex; flex: 1; height: 81px; }
.draw { width: 223px; }
.modify { width: 132px; }
.layers { width: 214px; }
.anno { width: 86px; }
.anno footer { letter-spacing: -.2px; }
.block { width: 80px; }
.big { display: flex; flex-direction: column; align-items: center; white-space: nowrap; flex: none; }
.big b, .tall b { font-weight: 400; font-size: 11.6px; line-height: 16px; margin-top: 4px; letter-spacing: -.1px; }
.tall .tight { letter-spacing: -.35px; }
.big .caret { margin-top: 3px; }
.bigA { font: bold 39px "Liberation Sans", Arial, sans-serif; fill: #3e4145; stroke: #fdfdfd; stroke-width: .8px; }
.col { display: flex; flex-direction: column; gap: 3px; padding-top: 4px; flex: none; }
.btn { display: flex; align-items: center; width: 24px; height: 22px; background: linear-gradient(#fff, #f1f1f1); border: 1px solid #ccc; flex: none; }
.btn .i { width: 22px; height: 22px; overflow: visible; margin-top: -2px; }
.btn.split { width: 36px; background: linear-gradient(90deg, transparent 22px, #ccc 22px, #ccc 23px, transparent 23px), #fafafa; }
.split .caret { margin-left: 4px; }
.btn.pair { width: 48px; background: linear-gradient(90deg, transparent 22px, #ccc 22px, #ccc 23px, transparent 23px), #fafafa; }
.btn.active { background: #b9dcf7; border-color: #4d88b8; }
.c1 { margin-left: 2px; }
.c2 { margin-left: 6px; }
.c3 { margin-left: 5px; }
.c4 { margin-left: 5px; }
.rows { display: flex; flex-direction: column; gap: 3px; flex: 1; padding: 4px 2px 0 2px; }
.lrow { display: flex; }
.g4 { margin-left: 4px; }
.g7 { margin-left: 7px; }
.combo { display: flex; align-items: center; height: 22px; border: 1px solid #ccc; background: linear-gradient(#fff, #f2f2f2); padding: 0 2px; font-size: 11.5px; letter-spacing: -.2px; white-space: nowrap; }
.combo span { flex: 1; }
.combo.lay { padding-left: 0; letter-spacing: 0; }
.lay span { margin-left: 1px; }
.tall { align-items: center; background: linear-gradient(#fff, #e7e7e7); border-right: 2px solid #999; padding-top: 1px; }
.tall b { margin-top: 3px; white-space: nowrap; }
.tall .caret { margin-top: auto; margin-bottom: 5px; }

.work { display: flex; height: 367px; flex: none; background: linear-gradient(#777, #8d8d8d 2px, #6b6b6b 5px, #636363); padding-top: 3px; }
.side { width: 23px; display: flex; flex-direction: column; gap: 6px; background: #646464; padding-top: 2px; }
.sbtn { width: 17px; height: 17px; margin-left: 2px; background: #777; outline: 1px solid #898989; }
.win { width: 499px; height: 361px; flex: none; border: 1px solid #222; border-radius: 4px 4px 0 0; background: linear-gradient(#a3bedb, #b8d0e8 28px, #b2cbe4); padding: 0 7px; box-shadow: inset 1px 1px #eef5fb, inset -1px -1px #9edaf2; }
.off { background: linear-gradient(#bfcfdf, #d6e2ee 28px, #d5e1ed); }
.cap { display: flex; align-items: center; height: 28px; font-size: 12px; color: #333; padding: 5px 0 0 1px; letter-spacing: -.4px; }
.cap span { margin-left: 3px; flex: 1; }
.off .cap { color: #667280; letter-spacing: -.35px; }
.wb { width: 31px; height: 18px; margin-left: 2px; border: 1px solid #6c87a5; border-radius: 2px; background: linear-gradient(#cadcf0, #a6c1dd 50%, #92b2d2 51%, #b9d0e8); }
.off .wb { background: #c8d8e7; border-color: #8ba1b8; }
.wb.close { background: linear-gradient(#e39a8d, #cd5746 50%, #b52c19 51%, #cf6150); border-color: #6c3030; }
.vlabel { font: 9px "Noto Sans", sans-serif; fill: #eee; }
.compass { font: bold 9px "Liberation Sans", Arial, sans-serif; fill: #c5c8cb; }
.compass .top { font-size: 6px; fill: #555; }
.wcs { font: 9px "Liberation Sans", Arial, sans-serif; fill: #555a60; }
.mtab { font: 11px "Liberation Sans", Arial, sans-serif; fill: #222; }
.plan { font: 900 7px "Liberation Sans", Arial, sans-serif; fill: #000; stroke: #000; stroke-width: .3px; }
.plan .ave { font-size: 10px; }
.tb { font: 6px "Liberation Sans", Arial, sans-serif; fill: #111; }
.two { font: bold 7px "Liberation Sans", Arial, sans-serif; fill: #c7cbe0; }

.cmd { display: flex; height: 45px; padding: 2px 0 0 22px; background: #646464; flex: none; }
.grip { width: 23px; background: linear-gradient(#858585, #4c4c4c); overflow: hidden; }
.lines { flex: 1; }
.hist { height: 19px; background: #c8c8c8; border-bottom: 2px solid #aaa; }
.prompt { display: flex; align-items: center; height: 24px; padding: 0 0 1px 5px; background: #fff; }
.prompt em { margin-left: 3px; font: italic 14.5px "DejaVu Sans Mono", "Liberation Mono", monospace; color: #999; }

.status { display: flex; height: 19px; flex: none; border-top: 2px solid #222; background: linear-gradient(#999, #747474); }
.coord { width: 150px; padding-left: 9px; font: 10.2px/17px "Liberation Sans", Arial, sans-serif; color: #111; white-space: nowrap; letter-spacing: -.12px; }
.s { width: 17.6px; height: 17px; border-right: 1px solid #555; background: linear-gradient(#bbb, #929292); }
.s.on { background: linear-gradient(#d6eff9, #a1cfe2); }
.model { margin-left: auto; width: 42px; font: 11px/18px "Liberation Sans", Arial, sans-serif; color: #111; }
.tray { background: linear-gradient(#aaa, #858585); }
.scale { font: 11px "Liberation Sans", Arial, sans-serif; fill: #111; }
```
